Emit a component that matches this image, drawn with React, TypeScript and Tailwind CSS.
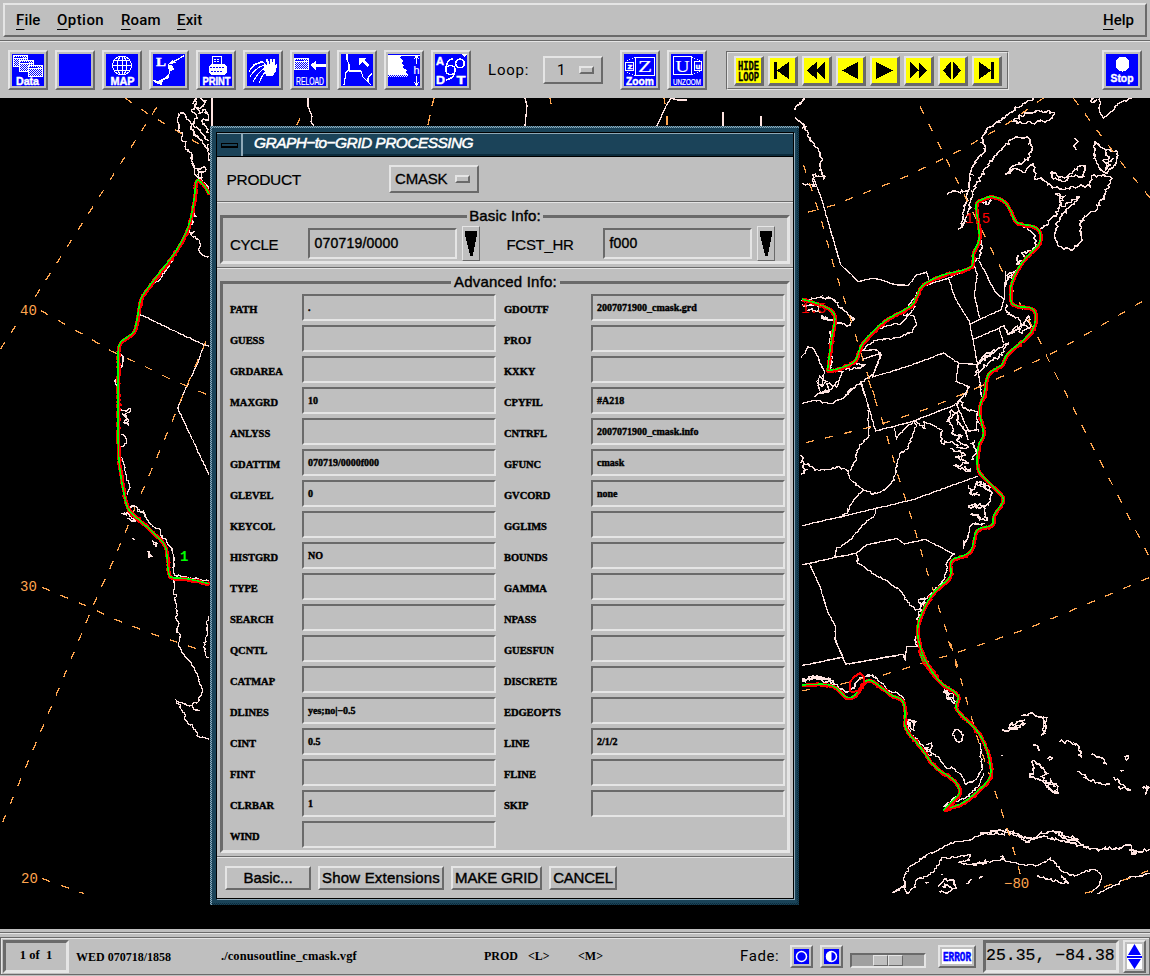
import type { ReactNode } from "react";

const SANS = "font-['Liberation_Sans',sans-serif]";
const SERIF = "font-['Liberation_Serif',serif]";
const RAISED = "border-t-[#e5e5e5] border-l-[#e5e5e5] border-r-[#6a6a6a] border-b-[#6a6a6a]";
const SUNKEN = "border-t-[#6a6a6a] border-l-[#6a6a6a] border-r-[#e5e5e5] border-b-[#e5e5e5]";

/* ---------- map drawing ---------- */

const parse = (points: string) => points.trim().split(/\s+/).map((p) => p.split(",").map(Number));

/* Jagged polyline: every segment is subdivided and its points displaced by seeded noise. */
function rough(points: string | number[][], amp: number) {
  const pts = typeof points === "string" ? parse(points) : points;
  let seed = Math.round(pts[0][0] * 31 + pts[0][1] * 17 + pts.length) % 9973;
  const rnd = () => {
    seed = (seed * 1103 + 12345) % 65521;
    return seed / 65521 - 0.5;
  };
  const out = [`M${pts[0][0]},${pts[0][1]}`];
  for (let i = 1; i < pts.length; i++) {
    const [x0, y0] = pts[i - 1];
    const [x1, y1] = pts[i];
    const n = Math.max(1, Math.round(Math.hypot(x1 - x0, y1 - y0) / 6));
    for (let k = 1; k <= n; k++) {
      const a = k < n ? amp : amp / 3;
      const x = x0 + ((x1 - x0) * k) / n + rnd() * a;
      const y = y0 + ((y1 - y0) * k) / n + rnd() * a;
      out.push(`L${x.toFixed(1)},${y.toFixed(1)}`);
    }
  }
  return out.join("");
}

/* Catmull-Rom interpolation through the given points. */
function smooth(points: string) {
  const p = parse(points);
  const out: number[][] = [p[0]];
  for (let i = 0; i < p.length - 1; i++) {
    const a = p[Math.max(0, i - 1)];
    const b = p[i];
    const c = p[i + 1];
    const d = p[Math.min(p.length - 1, i + 2)];
    for (let k = 1; k <= 5; k++) {
      const t = k / 5;
      out.push(
        [0, 1].map(
          (j) =>
            0.5 *
            (2 * b[j] + (c[j] - a[j]) * t + (2 * a[j] - 5 * b[j] + 4 * c[j] - d[j]) * t * t + (3 * b[j] - a[j] - 3 * c[j] + d[j]) * t * t * t),
        ),
      );
    }
  }
  return out;
}

type Tile = { x: number; y: number; coast: string[]; fine?: string[]; lines: string[]; grid: string[]; front: string[] };

const tiles: Tile[] = [
  {
    x: 0,
    y: 98,
    coast: [
      "535,45 537,80 533,100 548,105 545,125 560,130 556,155 572,165 575,190 584,210 600,215 612,205 618,215 600,222 605,240 592,238 575,195",
      "540,45 555,52 570,72 575,95 600,125 627,160",
      "590,0 585,20 575,40 590,60 580,85 600,95 610,110 627,130",
      "600,0 618,8 610,25 590,30 600,45 615,35 625,60 605,70 620,90 627,105",
      "636,0 637,12",
      "590,215 598,240 610,255 627,270",
      "582,345 588,355 570,360 582,370 565,385 568,400 578,405 585,400",
    ],
    fine: [
      "568,400 575,412 598,428 602,440 597,458 605,470 627,476",
      "355,765 366,770 368,795 363,810",
      "350,840 346,855 352,865",
      "362,935 378,940 392,932 388,945 370,950 385,965 384,978 372,975 380,955 366,945",
      "362,1010 375,1015 380,1030 372,1043 360,1045",
      "362,1072 370,1095 376,1120 380,1145 390,1168 383,1190",
      "365,1245 380,1250 395,1225 410,1228 432,1245 440,1258",
      "455,562 480,545 500,515 520,480",
      "625,138 625,190",
    ],
    lines: ["418,648 470,673 540,707 612,740 627,745", "612,740 595,790 560,865 533,930 627,1130"],
    grid: [
      "375,0 445,48 600,140",
      "470,28 100,605",
      "47,683 0,755",
      "123,638 250,710 335,760 430,803 510,843 627,892",
      "618,730 560,865 533,930 470,1080 420,1195",
    ],
    front: [
      "627,288 612,262 590,247 583,300 572,360 556,408 520,470 470,535 440,575 422,605 412,660 402,700 385,715 358,740 354,800 354,900 355,1050 362,1130 375,1200 387,1238 405,1255 420,1262",
    ],
  },
  {
    x: 0,
    y: 500,
    coast: ["368,40 385,42 395,55 410,62 385,55", "455,122 465,128 468,140 458,132", "446,152 454,170 447,172 446,155", "397,113 402,119"],
    fine: [
      "387,18 408,20 415,35 432,38 442,60 460,80 478,85 480,105 500,125 516,145 521,170 520,215 525,225 627,243",
      "519,235 524,265 520,280 530,285 524,300 532,345 528,355 536,370 531,395 541,405 536,440 545,458 575,490 590,520 608,570 598,590 596,605 578,612 570,618 545,608 528,602 545,628 556,645 557,662 578,680 597,710 612,712 627,718",
      "575,615 583,628 598,633 585,630",
      "626,348 620,365 622,395 612,440 620,472 626,475",
      "530,385 533,395 528,398",
    ],
    lines: [],
    grid: [
      "404,22 400,42",
      "385,75 330,205 280,315 200,510 0,985",
      "127,262 180,285 260,318 345,358 457,402 570,440 597,448",
      "127,1136 188,1158 252,1181",
    ],
    front: ["375,0 387,30 412,55 460,98 490,130 500,158 505,215 517,233 560,236 627,251"],
  },
  {
    x: 795,
    y: 98,
    coast: [
      "0,35 30,0",
      "0,60 20,75 35,100 50,130 70,160 82,185 75,215 88,240 72,235 60,228 50,245 60,265 45,262 20,255",
      "715,0 690,15 660,35 620,65 575,95 562,120 570,160 535,200 525,240 520,280 515,310 505,350 500,380 492,395",
      "500,390 520,350 528,300 545,255 580,200 620,150 665,115 700,120 712,145 700,180 685,195 650,205 632,230 655,212 690,222 715,195 722,245 740,240 770,265 810,275 860,262 885,265 890,235 925,230 950,240 930,290 900,340 870,355 855,380 858,430 830,455 790,445 778,410 790,370 820,330 855,295 825,315 800,325 795,290 780,290 805,295 790,340 760,375 735,392",
      "652,72 690,45 740,38 780,45 765,65 710,75 652,72",
      "770,220 790,240 815,238 840,215 870,200 865,235 835,235 800,250 770,240 770,220",
      "900,130 898,180 915,215 935,228 960,200 968,160 945,155 920,150 900,130",
      "930,160 940,185 925,190 945,200 930,215 955,180",
      "840,120 848,130 838,145 845,155",
      "455,290 480,280 518,280",
      "630,565 638,530 665,520 640,545 670,510",
      "668,470 665,500 690,480 680,465 710,460 725,430 715,410 700,395 680,380",
      "632,620 640,650 670,660 680,680 700,655 705,690 680,705 665,685 640,712",
      "540,835 548,800 600,760 640,735 620,770 580,795 555,820 540,835",
      "630,690 640,710 665,695 690,680 715,700",
      "545,800 570,770 600,755 560,790",
      "20,610 65,600 108,600 145,635 178,660 165,682 125,675 80,655 100,660",
      "20,620 70,625 72,640 35,635",
      "560,425 555,480 540,490",
      "560,310 580,318 590,305",
      "105,700 110,800 100,815",
      "890,0 890,15 905,5",
    ],
    fine: [
      "915,0 912,40 925,62 950,40 975,15 1010,0",
      "380,565 350,610 325,650 355,652 365,680 345,705 300,720 245,728 220,740 205,757 240,755 258,770 235,830 195,855 160,880 148,898",
      "235,700 290,680 320,675 345,645 360,625",
      "100,817 145,820 130,850 110,875 70,885 60,898",
      "70,850 75,835 95,850 80,865 65,850",
      "20,780 38,745 55,750 70,780 88,820 80,860",
      "175,795 210,800 190,810 150,815",
    ],
    lines: [
      "55,240 75,290 137,500 190,550 240,540 300,560 340,562 365,530 395,522 403,545",
      "460,538 480,600 523,670 548,800 560,898",
      "385,565 460,540 530,510",
      "533,490 547,530 538,590 553,660",
      "550,485 600,580 627,605 618,635 525,678",
      "533,725 628,683 640,712",
      "612,690 625,735",
      "232,837 340,805 445,765 490,795 548,800",
      "490,795 483,850 520,865 510,898",
      "258,770 232,837",
      "195,850 212,898",
      "632,520 627,605",
      "200,785 258,765",
    ],
    grid: [
      "375,25 440,155 510,295 625,525",
      "645,560 730,720 755,775 790,845 820,900",
      "38,343 115,322 335,235 500,155 640,75 745,0",
      "25,200 50,275 80,370 115,500 150,610 175,690 205,790 225,850 240,900",
      "835,0 905,95 980,195 1065,300",
      "1042,610 880,705 755,775 600,845 490,895",
    ],
    front: [
      "20,603 75,620 118,650 110,720 100,800 105,817 175,793 200,740 235,700 275,665 345,625 365,595 383,562 440,532 525,508 535,465 552,425 550,380 543,320 560,305 590,296 625,308 645,335 665,373 715,385 735,405 730,440 680,495 650,555 648,610 670,625 718,637 710,700 640,765 620,800 583,825 572,860 567,900",
    ],
  },
  {
    x: 795,
    y: 380,
    coast: [
      "480,70 495,60 505,85 550,95 545,140 550,155",
      "455,125 470,90 480,100 460,120 475,150 470,160 500,165 485,180 520,200 500,205 470,185 440,190 435,160 445,150",
      "465,205 510,225 480,230 520,250 480,258 525,275 510,260",
      "530,240 545,210 530,190 540,180",
      "520,315 530,340 555,345 525,340 545,310 570,325 590,340 580,375 545,375 520,378 570,385 575,420 555,420 550,405 525,405 555,412",
      "545,305 570,315 590,318 580,330 565,310",
      "515,480 505,500 520,460 530,435 570,430",
      "480,520 460,540 450,580 440,610 415,635 390,660 370,700 365,760 358,780 370,800",
      "370,660 395,655 385,675 370,660",
      "20,897 50,895 80,890 110,897",
      "20,225 25,260 35,270 20,282",
      "490,90 485,120 510,150 520,180",
    ],
    fine: [
      "58,60 85,68 110,72 145,55 170,30 200,5",
      "68,0 75,40 105,35 95,10 125,20 130,0",
      "20,260 40,252 60,270 100,268 130,260 158,272 162,295 205,330 235,342 270,330 298,300 302,270 315,220 340,205 360,140",
      "218,90 222,165 190,205 180,245 165,272",
      "298,145 305,175 325,150 360,120 390,148 385,125 420,140 440,150",
      "205,330 170,370 155,400 130,412",
      "242,388 235,410 200,440 165,480 125,505 118,532",
      "183,520 190,550 240,585 280,605 320,635 335,660 362,690 380,690",
      "370,660 378,675 390,665",
      "210,890 235,885 248,897",
    ],
    lines: [
      "20,70 58,60",
      "200,10 242,153 350,125 480,75",
      "485,75 520,153 550,148",
      "20,437 130,412 350,360 550,288",
      "20,555 118,533 183,520 215,495 305,475 328,492 390,478 475,522",
      "42,550 75,620 100,700 122,740 120,780 152,853 325,823 330,840 335,800 368,800",
      "20,857 140,832",
      "525,20 485,75",
      "355,120 365,140",
    ],
    grid: [
      "220,0 265,130 310,290 345,400 395,570 430,680 470,800 485,865",
      "33,188 240,138 400,85 560,18",
      "808,30 870,155 950,310 1065,535",
      "1062,593 900,662 700,745 480,820 255,888",
    ],
    front: [
      "573,0 568,40 553,90 565,160 550,200 550,270 595,320 625,358 597,405 590,435 545,452 525,515 470,542 465,590 410,645 370,730 375,810 390,850 430,900",
    ],
  },
  {
    x: 795,
    y: 640,
    coast: [
      "20,122 50,110 80,112 105,120 130,140 150,155 165,155 185,125 205,110",
      "20,125 40,118 65,115 95,125 120,133",
      "340,240 362,245 355,270 345,262 340,240",
      "395,315 410,310 408,345 398,345 390,325 405,330",
      "448,150 475,165 478,190 455,170 448,150",
      "455,152 462,175 470,170",
      "472,285 480,268 500,275 502,300 485,305 472,285",
      "620,268 640,275 690,250 640,265 645,255 692,240",
      "680,228 710,218 730,230 755,235 750,280 740,285 748,255 740,235",
      "715,315 730,320 732,335",
      "710,362 725,370 758,400 740,410 755,430 785,430 790,460 770,455 750,430 720,415 705,410 715,395 710,362",
      "760,430 780,440 768,415 755,440 785,460",
      "757,357 772,353 762,362",
      "793,305 825,305 852,320 860,352 850,345",
      "890,342 920,355 935,372 925,368",
      "848,393 880,418 920,432 945,432",
      "955,410 985,435 1008,452 970,440",
      "990,350 1000,350 995,360 990,350",
      "1043,445 1065,442 1050,465",
      "975,392 985,390",
      "555,585 590,570 640,572 680,590 710,595 740,578 790,575 820,590 850,605 880,625",
      "555,580 600,580 650,580 700,605 745,590 790,600 830,610 875,625 910,628 940,625 975,625 990,615 1010,620 1010,640 1030,635 1065,628",
      "780,575 800,590 820,600 850,600 830,590",
      "1003,630 1025,640 1008,642 1015,632",
      "430,740 445,718 475,720 482,745 455,760 432,752",
      "440,740 460,735 470,748",
      "390,728 402,728",
      "440,703 440,703 442,706",
      "512,730 530,718",
      "552,715 565,708",
      "725,710 760,718 790,725 820,730 800,710 815,725",
      "620,348 622,346",
      "535,675 545,670 565,672 570,658",
      "615,650 628,655 620,660",
    ],
    fine: [
      "205,110 225,105 245,115 280,150 320,165 330,195 335,240",
      "335,240 345,280 395,330 430,350 450,380 475,385 500,405 512,435",
      "512,435 540,420 560,390 555,310",
      "565,400 550,440 515,470 480,485 445,500 475,475 500,470",
      "555,585 520,600 480,605 440,625 395,645 340,685 325,715 330,735 292,758 330,740 335,760 360,740 365,720 400,705 425,685 440,655 490,650 525,645 522,660 490,668 530,675 565,668 620,658 680,675 730,675 765,655 780,670 797,692 840,708 885,690 905,692 920,710 910,740 888,760",
      "907,760 960,735 1000,715 1065,700",
    ],
    lines: ["122,0 152,73 325,43 330,60 335,20 368,20", "20,77 140,52"],
    grid: [
      "460,2 485,70 520,200 555,320 590,425 630,545 665,660 680,720",
      "20,153 80,140 135,133 205,115",
      "870,760 925,742 1000,715 1065,690",
    ],
    front: [
      "370,0 390,60 435,125 488,165 485,208 540,265 570,315 585,370 583,415 540,460 500,490 445,510",
      "445,510 490,465 490,440 470,415 420,380 375,320 332,265 330,215 320,180 285,163 235,125 210,125 180,165 155,172 125,145 90,133 20,135",
    ],
  },
];

const toPath = (pts: number[][]) => "M" + pts.map((q) => q.map((v) => v.toFixed(1)).join(",")).join("L");

function MapView() {
  return (
    <svg className="block" width="1150" height="831" viewBox="0 98 1150 831" fill="none" shapeRendering="crispEdges">
      {tiles.map((t, i) => (
        <g key={i} transform={`translate(${t.x} ${t.y}) scale(0.33333)`}>
          {t.lines.map((p, k) => (
            <path key={k} d={rough(p, 2)} stroke="#ffe4e1" strokeWidth="3.8" />
          ))}
          {t.coast.map((p, k) => (
            <path key={k} d={rough(p, 9)} stroke="#ffe4e1" strokeWidth="4.4" />
          ))}
          {(t.fine ?? []).map((p, k) => (
            <path key={k} d={rough(p, 6)} stroke="#ffe4e1" strokeWidth="3.8" />
          ))}
          {t.grid.map((p, k) => (
            <path key={k} d={"M" + p.split(" ").join("L")} stroke="#ffa54f" strokeWidth="3.8" strokeDasharray="25 34" />
          ))}
        </g>
      ))}
      <g stroke="#ffe4e1" strokeWidth="1.3">
        <path d="M212 98V126M308 98v8l4 10l-1 6l3 4M196 98l-3 6M525 98l2 8l-2 20M671 98l-5 8l-9 20M670 98l8 2l9 0M723 112v14M761 116v10M805 98l-4 5" />
      </g>
      <g stroke="#ffa54f" strokeWidth="1.3">
        <path d="M300 118l-3 7M434 98l-2 8M430 115l-2 10M550 98l1 6M664 98l1 6M667 116v9" />
      </g>
      {tiles.map((t, i) => (
        <g key={i} transform={`translate(${t.x} ${t.y}) scale(0.33333)`}>
          {t.front.map((p, k) => (
            <g key={k}>
              <path d={rough(smooth(p), 5)} stroke="#ff0000" strokeWidth="11.5" transform="translate(1.5 2)" />
              <path d={toPath(smooth(p))} stroke="#00ff00" strokeWidth="4.4" />
            </g>
          ))}
        </g>
      ))}
      <path d="M850 691v-9l4-5l6-4l4 4v6l-6 8l-6 1z" stroke="#ff0000" strokeWidth="2" />
      <g className="font-['Liberation_Mono',monospace]" fontSize="14">
        <g fill="#ffa54f">
          <text x="20" y="315">40</text>
          <text x="20" y="591">30</text>
          <text x="21" y="883">20</text>
          <text x="1004" y="888">−80</text>
        </g>
        <g fill="#ff0000">
          <text x="965" y="223">1.5</text>
          <text x="801" y="313">1.5</text>
        </g>
        <text x="180" y="561" fill="#00ff00" fontWeight="bold">1</text>
      </g>
    </svg>
  );
}

/* ---------- toolbar icons (32 x 32) ---------- */

function Caption({ x, y, w, size, children, weight = "bold", font = "Liberation Sans" }: { x: number; y: number; w: number; size: number; children: string; weight?: string; font?: string }) {
  return (
    <text x={x} y={y} textLength={w} lengthAdjust="spacingAndGlyphs" fontSize={size} fontWeight={weight} fontFamily={font + ", sans-serif"} fill="#fff" stroke="#fff" strokeWidth={weight === "bold" ? 0.4 : 0.2}>
      {children}
    </text>
  );
}

const Folder = ({ x, y }: { x: number; y: number }) => (
  <g transform={`translate(${x} ${y})`}>
    <rect x="0" y="0" width="15" height="12" fill="#0000ff" />
    <rect x="0.5" y="0.5" width="14" height="11" fill="url(#dither)" stroke="#fff" />
    <path d="M1 2.5h13" stroke="#0000ff" />
    <path d="M1 3.5h13" stroke="#fff" />
    <path d="M10 2.5h1M12 2.5h1" stroke="#fff" />
  </g>
);

const icons: ReactNode[] = [
  <>
    <Folder x={1} y={1} />
    <Folder x={7} y={6} />
    <Folder x={16} y={11} />
    <rect x="0" y="22.500" width="32" height="9.500" fill="#0000ff" />
    <Caption x={4} y={31} w={23} size={10}>Data</Caption>
  </>,
  null,
  <>
    <circle cx="16" cy="11.5" r="9.5" stroke="#fff" />
    <ellipse cx="16" cy="11.5" rx="4.5" ry="9.5" stroke="#fff" />
    <path d="M16 2v19M6.5 11.5h19M8 6.5h16M8 16.5h16" stroke="#fff" />
    <Caption x={4.500} y={31} w={24} size={10}>MAP</Caption>
  </>,
  <>
    <Caption x={3} y={12} w={10} size={13} font="Liberation Serif">L</Caption>
    <path d="M31.500 1.500L20 8" stroke="#fff" strokeWidth="1.300" />
    <path d="M15 10l5-5 1 3 4 1z" fill="#fff" />
    <path d="M15 10l5 2 1 4-4 1-1 7-6 2-1 5-7-2-2-3 5 1 6-3 5-5z" fill="#fff" />
  </>,
  <>
    <path d="M12.500 10V2.500h9V10" stroke="#fff" />
    <path d="M14 5h6M14 7.500h6" stroke="#fff" strokeDasharray="2 1" />
    <path d="M11 10h13l3 3v5l-3 3H11l-2-2v-7z" fill="#fff" />
    <path d="M10 13h14M11 17h12" stroke="#0000ff" strokeDasharray="2 1" />
    <Caption x={2.500} y={31} w={28} size={10}>PRINT</Caption>
  </>,
  <>
    <path d="M17 8C9 9 4 13 2 18M17 11C11 13 6 17 3 23M18 14C13 17 9 22 6 28M19 17C16 20 14 24 12 29M16 7L6 11" stroke="#fff" />
    <path d="M17 9l3 2-1-6 1.500-.5 2 5V5h2l0 6 2-6 2 1-1 6 2-2 1 1-2 7-3 4h-6l-2-5z" fill="#fff" />
  </>,
  <>
    <Folder x={0} y={4} />
    <path d="M16 11l6-4v3h10v3H22v3z" fill="#fff" />
    <Caption x={2} y={30.500} w={28} size={11} weight="normal">RELOAD</Caption>
  </>,
  <>
    <path d="M6 0v6l2 4v6l-3 2L3 31M8 17h12l2 6 8 8M31 19l-4 5v4" stroke="#fff" strokeWidth="1.200" />
    <path d="M18 4h7l-2 2 5 5-2 2-5-5-3 3z" fill="#fff" />
  </>,
  <>
    <path d="M0 1h14l-2 3 3 3-2 2 3 2-1 3 4 2-1 3 3 2H0z" fill="#fff" />
    <path d="M1 21.500h20M0 22.500h20" stroke="#fff" strokeDasharray="1 1" />
    <path d="M14 1.500h18M28.500 3v7M26 5l2.500-3 2.500 3M28.500 22v8M26 28l2.500 3 2.500-3" stroke="#fff" />
    <Caption x={25.500} y={20} w={6} size={11} weight="normal">h</Caption>
  </>,
  <>
    <Caption x={1} y={10.500} w={8} size={11}>A</Caption>
    <Caption x={1} y={30} w={9} size={11}>D</Caption>
    <Caption x={21.500} y={30} w={9} size={11}>T</Caption>
    <circle cx="25" cy="9.500" r="4.300" stroke="#fff" strokeWidth="1.600" />
    <circle cx="15.500" cy="16" r="4.600" stroke="#fff" strokeWidth="1.600" />
    <path d="M18 4.500c-5 1-7 6-7 11M20 16c0 5-3 9-9 10" stroke="#fff" strokeWidth="1.600" />
    <path d="M26 0h6l-3 3z" fill="#fff" />
  </>,
];

function IconButton({ children }: { children?: ReactNode }) {
  return (
    <button className={`size-[40px] shrink-0 border-2 p-[2px] ${RAISED}`}>
      <svg className="block bg-[#0000ff]" width="32" height="32" viewBox="0 0 32 32" fill="none" shapeRendering="crispEdges">
        <defs>
          <pattern id="dither" width="2" height="2" patternUnits="userSpaceOnUse">
            <path d="M0 0h1v1h-1zM1 1h1v1h-1z" fill="#fff" />
          </pattern>
        </defs>
        {children}
      </svg>
    </button>
  );
}

const loopIcons = [
  "M4 4h3v18h-3zM20 4v18L7 13z",
  "M13 4v18L3 13zM22 4v18L12 13z",
  "M21 4v18L4 13z",
  "M4 4v18L22 13z",
  "M4 4v18L13 13zM13 4v18L22 13z",
  "M11 4v18L3 13zM14 4v18L22 13z",
  "M5 4v18L18 13zM18 4h3v18h-3z",
];

function LoopButton({ children }: { children: ReactNode }) {
  return (
    <button className={`size-[30px] border-2 border-b-[3px] border-r-[3px] ${RAISED}`}>
      <svg className="block bg-[#ffff00]" width="25" height="25" viewBox="0 0 26 26" fill="#000" shapeRendering="crispEdges">
        {children}
      </svg>
    </button>
  );
}

const Nub = () => <span className={`block h-[8px] w-[15px] border-2 ${RAISED}`} />;

/* ---------- dialog ---------- */

const left: [string, string][] = [
  ["PATH", "."], ["GUESS", ""], ["GRDAREA", ""], ["MAXGRD", "10"], ["ANLYSS", ""], ["GDATTIM", "070719/0000f000"],
  ["GLEVEL", "0"], ["KEYCOL", ""], ["HISTGRD", "NO"], ["TYPE", ""], ["SEARCH", ""], ["QCNTL", ""], ["CATMAP", ""],
  ["DLINES", "yes;no|−0.5"], ["CINT", "0.5"], ["FINT", ""], ["CLRBAR", "1"], ["WIND", ""],
];
const right: [string, string][] = [
  ["GDOUTF", "2007071900_cmask.grd"], ["PROJ", ""], ["KXKY", ""], ["CPYFIL", "#A218"], ["CNTRFL", "2007071900_cmask.info"],
  ["GFUNC", "cmask"], ["GVCORD", "none"], ["GGLIMS", ""], ["BOUNDS", ""], ["GAMMA", ""], ["NPASS", ""], ["GUESFUN", ""],
  ["DISCRETE", ""], ["EDGEOPTS", ""], ["LINE", "2/1/2"], ["FLINE", ""], ["SKIP", ""],
];

function Column({ rows, labelClass }: { rows: [string, string][]; labelClass: string }) {
  return (
    <div className="flex flex-col gap-[4px]">
      {rows.map(([name, value]) => (
        <div key={name} className="flex h-[27px]">
          <span className={`${labelClass} ${SERIF} pt-[9px] text-[10.500px] leading-[13px] font-bold tracking-[-0.050px] [-webkit-text-stroke:0.4px]`}>{name}</span>
          <div className={`w-[194px] border-2 pt-[5px] pl-[4px] ${SUNKEN} ${SERIF} text-[10px] leading-[13px] font-bold whitespace-nowrap [-webkit-text-stroke:0.4px]`}>{value}</div>
        </div>
      ))}
    </div>
  );
}

const Separator = () => <div className="h-[2px] border-t border-b border-t-[#6a6a6a] border-b-[#e5e5e5]" />;

function Frame({ title, className, titleClass, children }: { title: string; className: string; titleClass: string; children: ReactNode }) {
  return (
    <div className={`relative ml-[3px] w-[570px] border-[3px] ${SUNKEN} ${className}`}>
      <span className={`absolute -top-[10px] bg-[#bfbfbf] px-[2px] text-center text-[15px] leading-[16px] whitespace-nowrap [-webkit-text-stroke:0.4px] ${titleClass}`}>{title}</span>
      {children}
    </div>
  );
}

function Combo({ value }: { value: string }) {
  return (
    <>
      <div className={`mt-[10px] h-[31px] w-[149px] border-2 pt-[5px] pl-[4.500px] text-[14px] leading-[17px] tracking-[0.200px] [-webkit-text-stroke:0.4px] ${SUNKEN}`}>{value}</div>
      <button className={`mt-[8px] ml-[5px] h-[35px] w-[18px] border ${RAISED}`}>
        <svg className="block" width="16" height="33" viewBox="0 0 16 33" shapeRendering="crispEdges">
          <path d="M2 4h12v4l-4 20v1H7v-1L2 8z" fill="#000" />
        </svg>
      </button>
    </>
  );
}

function Dialog() {
  return (
    <div className={`absolute top-[28px] left-[210px] h-[779px] w-[589px] bg-[repeating-conic-gradient(#8fa9b8_0_25%,#2b5970_0_50%)] bg-[length:2px_2px] pt-[2px] pl-[2px] ${SANS}`}>
      <div className="h-[777px] w-[587px] bg-[repeating-conic-gradient(#0b2b3c_0_25%,#1a4358_0_50%)] bg-[length:2px_2px] pr-[2px] pb-[2px]">
        <div className="h-[775px] w-[585px] bg-[#1a4358] pt-[4px] pl-[4px]">
          <div className="h-[767px] w-[578px] border border-black bg-[#bfbfbf] shadow-[1px_1px_0_#8fa9b8]">
            <div className="flex h-[24px] border-b border-b-black bg-[#1b4359] text-white">
              <div className="flex w-[26px] items-center justify-center border-t border-r-2 border-[#8fa9b8]">
                <span className="h-[5px] w-[17px] border border-b-2 border-black bg-[#1b4359]" />
              </div>
              <div className="grow border-t border-t-[#8fa9b8] border-b-2 border-b-[#0b2b3c] pl-[11px] text-[15.500px] leading-[18px] tracking-[-0.560px] whitespace-nowrap italic [-webkit-text-stroke:0.5px]">
                GRAPH−to−GRID PROCESSING
              </div>
            </div>
            <div className="flex h-[44px]">
              <span className="mt-[14px] ml-[9.500px] w-[162.500px] text-[15.500px] leading-[18px] tracking-[-0.300px] [-webkit-text-stroke:0.200px]">PRODUCT</span>
              <button className={`mt-[8px] flex h-[28px] w-[90px] items-center border-2 pl-[4px] ${RAISED}`}>
                <span className="w-[60px] text-left text-[15px] tracking-[-0.200px] [-webkit-text-stroke:0.3px]">CMASK</span>
                <Nub />
              </button>
            </div>
            <Separator />
            <Frame title="Basic Info:" className="mt-[12px] h-[49px]" titleClass="left-[244px] w-[76px] tracking-[0.150px]">
              <div className="flex">
                <span className="mt-[18px] ml-[7px] w-[78px] text-[15px] leading-[18px] tracking-[-0.400px] [-webkit-text-stroke:0.200px]">CYCLE</span>
                <Combo value="070719/0000" />
                <span className="mt-[18px] ml-[26.500px] w-[96.500px] text-[15px] leading-[18px] tracking-[-0.300px] [-webkit-text-stroke:0.200px]">FCST_HR</span>
                <Combo value="f000" />
              </div>
            </Frame>
            <div className="h-[3px]" />
            <Separator />
            <Frame title="Advanced Info:" className="mt-[12px] h-[572px]" titleClass="left-[228px] w-[109px] tracking-[0.200px]">
              <div className="flex pt-[10px] pl-[7px]">
                <Column rows={left} labelClass="w-[72px]" />
                <div className="w-[8px]" />
                <Column rows={right} labelClass="w-[87px]" />
              </div>
            </Frame>
            <div className="h-[3px]" />
            <Separator />
            <div className="flex gap-[7px] pt-[8px] pl-[8px] text-[15px] leading-[18px] whitespace-nowrap [-webkit-text-stroke:0.4px]">
              <button className={`h-[24px] w-[86px] border-2 pb-[1px] ${RAISED}`}>Basic...</button>
              <button className={`h-[24px] w-[126px] border-2 pb-[1px] tracking-[0.200px] ${RAISED}`}>Show Extensions</button>
              <button className={`h-[24px] w-[91px] border-2 pb-[1px] tracking-[-0.150px] ${RAISED}`}>MAKE GRID</button>
              <button className={`h-[24px] w-[68px] border-2 pb-[1px] tracking-[-0.200px] ${RAISED}`}>CANCEL</button>
            </div>
          </div>
        </div>
      </div>
    </div>
  );
}

/* ---------- page ---------- */

const MenuItem = ({ label, className }: { label: string; className: string }) => (
  <span className={className}>
    <span className="underline underline-offset-[4px]">{label[0]}</span>
    {label.slice(1)}
  </span>
);

export default function App() {
  return (
    <div className="flex h-[976px] w-[1150px] flex-col overflow-hidden bg-[#bfbfbf] text-black">
      <div className="h-[40px] pt-[3px] pl-[3px]">
        <div className={`flex h-[34px] w-[1144px] border-2 pt-[6px] pl-[11px] font-['Roboto',sans-serif] text-[15px] leading-[18px] font-medium ${RAISED}`}>
          <MenuItem label="File" className="w-[41px] tracking-[0.150px]" />
          <MenuItem label="Option" className="w-[64px] tracking-[0.450px]" />
          <MenuItem label="Roam" className="w-[56px] tracking-[0.150px]" />
          <MenuItem label="Exit" className="grow tracking-[0.150px]" />
          <MenuItem label="Help" className="w-[42px]" />
        </div>
      </div>
      <Separator />
      <div className="flex h-[56px] pt-[8px] pl-[8px]">
        <div className="flex gap-[7px]">
          {icons.map((icon, i) => (
            <IconButton key={i}>{icon}</IconButton>
          ))}
        </div>
        <span className="mt-[11px] ml-[17px] w-[55px] font-['Roboto',sans-serif] text-[15px] leading-[18px] tracking-[0.800px]">Loop:</span>
        <button className={`mt-[6px] flex h-[28px] w-[60px] items-center border-2 pl-[12px] font-['Roboto',sans-serif] text-[15px] ${RAISED}`}>
          <span className="w-[22px] text-left">1</span>
          <Nub />
        </button>
        <div className="ml-[17px] flex gap-[7px]">
          <IconButton>
            <path d="M11.500 3.500h19v18h-19zM1.500 8.500h8v8h-8z" stroke="#fff" strokeWidth="1.200" />
            <path d="M3 7l8-4M3 18l8 4" stroke="#fff" strokeDasharray="1 1" />
            <Caption x={14} y={18} w={14} size={17} font="Liberation Serif" weight="normal">Z</Caption>
            <Caption x={3.500} y={15} w={5} size={8}>z</Caption>
            <Caption x={2} y={31} w={28} size={10.500}>Zoom</Caption>
          </IconButton>
          <IconButton>
            <path d="M2.500 2.500h18v18h-18zM23.500 7.500h7v9h-7z" stroke="#fff" strokeWidth="1.200" />
            <path d="M21 3l8 4M21 21l8-4" stroke="#fff" strokeDasharray="1 1" />
            <Caption x={4.500} y={17.500} w={14} size={17} font="Liberation Serif" weight="normal">U</Caption>
            <Caption x={24.500} y={15} w={5} size={8}>u</Caption>
            <Caption x={2} y={30.500} w={28} size={9} weight="normal">UNZOOM</Caption>
          </IconButton>
        </div>
        <div className="mt-[1px] ml-[19px] h-[39px] w-[283px] border border-t-[#6a6a6a] border-r-[#e5e5e5] border-b-[#e5e5e5] border-l-[#6a6a6a]">
          <div className="flex h-[37px] gap-[4px] border border-t-[#e5e5e5] border-r-[#6a6a6a] border-b-[#6a6a6a] border-l-[#e5e5e5] pt-[3px] pl-[6px]">
            <LoopButton>
              <text x="2" y="12" textLength="22" lengthAdjust="spacingAndGlyphs" fontSize="13" fontWeight="bold" fontFamily="Liberation Mono" stroke="#000" strokeWidth="0.300">HIDE</text>
              <text x="2" y="24" textLength="22" lengthAdjust="spacingAndGlyphs" fontSize="13" fontWeight="bold" fontFamily="Liberation Mono" stroke="#000" strokeWidth="0.300">LOOP</text>
            </LoopButton>
            {loopIcons.map((d) => (
              <LoopButton key={d}>
                <path d={d} />
              </LoopButton>
            ))}
          </div>
        </div>
        <div className="ml-[93px]">
          <IconButton>
            <ellipse cx="16.500" cy="10" rx="7" ry="7.500" fill="#fff" />
            <Caption x={4.500} y={28} w={23} size={11}>Stop</Caption>
          </IconButton>
        </div>
      </div>
      <div className="relative h-[831px] bg-black">
        <MapView />
        <Dialog />
      </div>
      <div className="h-[3px]" />
      <Separator />
      <div className="mt-[3px] h-[38px] border border-[#6a6a6a]">
        <div className={`flex h-[36px] border-t border-l border-t-[#e5e5e5] border-l-[#e5e5e5] pl-[1px] font-bold ${SERIF}`}>
          <div className={`mt-[1px] h-[33px] w-[66px] border-[3px] pt-[4px] text-center text-[12.500px] leading-[17px] whitespace-pre ${SUNKEN}`}>{"1 of  1"}</div>
          <span className="mt-[10px] ml-[7px] w-[145px] text-[12px] leading-[16px] whitespace-nowrap">WED 070718/1858</span>
          <span className="mt-[9px] w-[263px] text-[12.500px] leading-[16px] tracking-[0.070px] whitespace-nowrap">./conusoutline_cmask.vgf</span>
          <span className="mt-[9px] w-[44px] text-[12px] leading-[16px]">PROD</span>
          <span className="mt-[9px] w-[50px] text-[12px] leading-[16px]">&lt;L&gt;</span>
          <span className="mt-[9px] w-[162px] text-[12px] leading-[16px]">&lt;M&gt;</span>
          <span className="mt-[8px] w-[50px] font-['Roboto',sans-serif] text-[15px] leading-[18px] font-normal tracking-[0.600px]">Fade:</span>
          <button className={`mt-[6px] size-[23px] border-2 p-[2px] ${RAISED}`}>
            <svg className="block bg-[#0000ff]" width="15" height="15" viewBox="0 0 15 15">
              <circle cx="7.500" cy="7.500" r="5" fill="none" stroke="#fff" strokeWidth="1.500" />
            </svg>
          </button>
          <button className={`mt-[6px] ml-[7px] size-[23px] border-2 p-[2px] ${RAISED}`}>
            <svg className="block bg-[#0000ff]" width="15" height="15" viewBox="0 0 15 15">
              <circle cx="7.500" cy="7.500" r="5" fill="none" stroke="#fff" strokeWidth="1.500" />
              <path d="M7.500 2a5.500 5.500 0 0 0 0 11z" fill="#fff" />
            </svg>
          </button>
          <div className={`mt-[14px] ml-[7px] flex h-[15px] w-[76px] border-2 bg-[#a0a0a0] pl-[21px] ${SUNKEN}`}>
            <span className={`h-[11px] w-[15px] border bg-[#bfbfbf] ${RAISED}`} />
            <span className={`h-[11px] w-[15px] border bg-[#bfbfbf] ${RAISED}`} />
          </div>
          <button className={`mt-[6px] ml-[12px] h-[23px] w-[38px] border-2 p-[2px] ${RAISED}`}>
            <svg className="block bg-white" width="30" height="15" viewBox="0 0 30 15">
              <text x="1" y="12" textLength="28" lengthAdjust="spacingAndGlyphs" fontSize="12" fontWeight="bold" fontFamily="Liberation Mono" fill="#0000ff" stroke="#0000ff" strokeWidth="0.500">ERROR</text>
            </svg>
          </button>
          <div className={`mt-[1px] ml-[7px] h-[33px] w-[136px] border-[3px] pt-[3px] font-['Liberation_Mono',monospace] text-[16.500px] leading-[20px] font-normal whitespace-pre [-webkit-text-stroke:0.200px] ${SUNKEN}`}>25.35, −84.38</div>
          <button className={`mt-[1px] ml-[4px] h-[33px] w-[23px] border-2 p-[2px] ${RAISED}`}>
            <svg className="block bg-white" width="15" height="25" viewBox="0 0 15 25">
              <path d="M7.500 0L14 11H1zM7.500 25L14 15H1zM0 12h15v2H0z" fill="#0000ff" />
            </svg>
          </button>
        </div>
      </div>
    </div>
  );
}
